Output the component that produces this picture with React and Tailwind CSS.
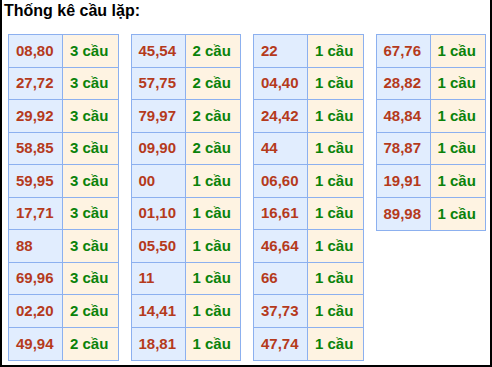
import React from 'react';

const tables = [
  [
    ['08,80', '3'], ['27,72', '3'], ['29,92', '3'], ['58,85', '3'], ['59,95', '3'],
    ['17,71', '3'], ['88', '3'], ['69,96', '3'], ['02,20', '2'], ['49,94', '2'],
  ],
  [
    ['45,54', '2'], ['57,75', '2'], ['79,97', '2'], ['09,90', '2'], ['00', '1'],
    ['01,10', '1'], ['05,50', '1'], ['11', '1'], ['14,41', '1'], ['18,81', '1'],
  ],
  [
    ['22', '1'], ['04,40', '1'], ['24,42', '1'], ['44', '1'], ['06,60', '1'],
    ['16,61', '1'], ['46,64', '1'], ['66', '1'], ['37,73', '1'], ['47,74', '1'],
  ],
  [
    ['67,76', '1'], ['28,82', '1'], ['48,84', '1'], ['78,87', '1'], ['19,91', '1'], ['89,98', '1'],
  ],
];

function CauTable({ rows }) {
  return (
    <div className="w-[111px] border border-[#8cb0ef] self-start">
      {rows.map(([pair, count], i) => (
        <div
          key={pair}
          className={`grid grid-cols-[54px_1fr] h-[32.5px] ${i < rows.length - 1 ? 'border-b border-[#8cb0ef]' : ''}`}
        >
          <div className="flex items-center pl-[7px] bg-[#e1edfe] text-[#b53a1c] border-r border-[#8cb0ef]">
            {pair}
          </div>
          <div className="flex items-center pl-[7px] bg-[#fef3e2] text-[#0a820a]">
            {count} cầu
          </div>
        </div>
      ))}
    </div>
  );
}

export default function App() {
  return (
    <div
      className="w-[492px] h-[367px] bg-white border-x-2 border-b-2 border-black pl-[6px] pr-[4px]"
      style={{ fontFamily: '"Liberation Sans", Arial, sans-serif' }}
    >
      <div className="pt-[2px] -ml-[4px] text-[16px] leading-[18px] font-bold text-black">
        Thống kê cầu lặp:
      </div>
      <div className="flex gap-[12px] mt-[14px] text-[15px] font-bold">
        {tables.map((rows, i) => (
          <CauTable key={i} rows={rows} />
        ))}
      </div>
    </div>
  );
}
